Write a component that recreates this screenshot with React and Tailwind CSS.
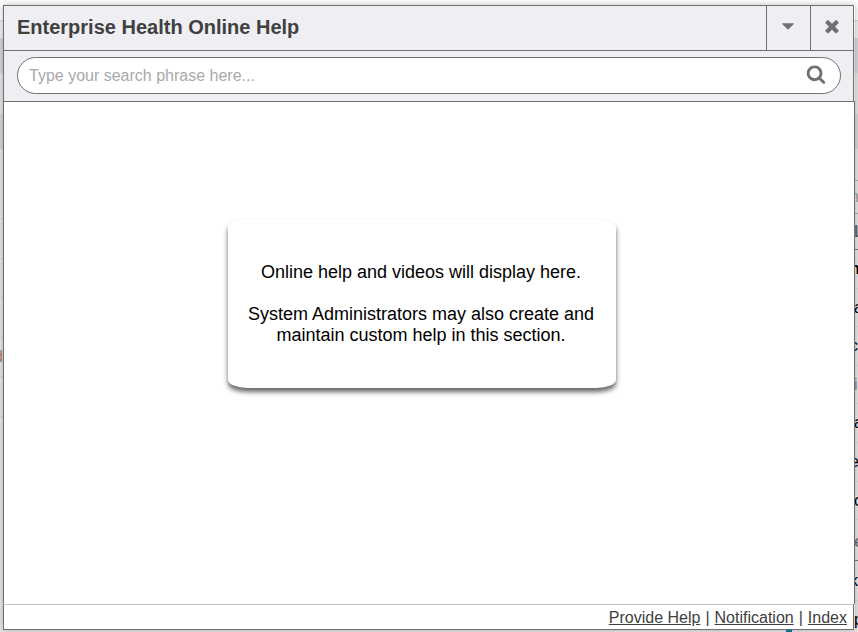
import React from "react";

const SearchIcon = () => (
  <svg viewBox="0 0 1792 1792" className="size-5" fill="currentColor" aria-hidden="true">
    <path d="M1216 832q0-185-131.5-316.5t-316.5-131.5-316.5 131.5-131.5 316.5 131.5 316.5 316.5 131.5 316.5-131.5 131.5-316.5zm512 832q0 52-38 90t-90 38q-54 0-90-38l-343-342q-179 124-399 124-143 0-273.5-55.5t-225-150-150-225-55.5-273.5 55.5-273.5 150-225 225-150 273.5-55.5 273.5 55.5 225 150 150 225 55.5 273.5q0 220-124 399l343 343q37 37 37 90z" />
  </svg>
);

const CloseIcon = () => (
  <svg viewBox="0 0 1792 1792" className="size-5" fill="currentColor" aria-hidden="true">
    <path d="M1490 1322q0 40-28 68l-136 136q-28 28-68 28t-68-28l-294-294-294 294q-28 28-68 28t-68-28l-136-136q-28-28-28-68t28-68l294-294-294-294q-28-28-28-68t28-68l136-136q28-28 68-28t68 28l294 294 294-294q28-28 68-28t68 28l136 136q28 28 28 68t-28 68l-294 294 294 294q28 28 28 68z" />
  </svg>
);

const CaretIcon = () => (
  <svg viewBox="0 0 1792 1792" className="size-5" fill="currentColor" aria-hidden="true">
    <path d="M1408 704q0 26-19 45l-448 448q-19 19-45 19t-45-19l-448-448q-19-19-19-45t19-45 45-19h896q26 0 45 19t19 45z" />
  </svg>
);

// Rows of the page under the help window
const leftRows = [
  { size: "h-[39px]" },
  { size: "h-[40px]" },
  { size: "h-[39px]" },
  { size: "h-[40px]" },
  { size: "h-[39px]", text: "d" },
  { size: "h-[40px]" },
];

const rightRows = [
  { size: "h-[33px] border-[#aaa]", text: "n", style: "text-[#999]" },
  { size: "h-[36px] border-[#777]", text: "L", style: "pl-1 font-bold text-[#666]" },
  { size: "h-[39px] border-[#d5d5d5]", text: "n", style: "font-bold text-black" },
  { size: "h-[38px] border-[#d5d5d5]", text: "a", style: "pl-1 text-black" },
  { size: "h-[39px] border-[#d5d5d5]", text: "c", style: "text-black" },
  { size: "h-[38px] border-[#d5d5d5]", text: "in", style: "pl-1 text-[#888]" },
  { size: "h-[39px] border-[#d5d5d5]", text: "a", style: "pl-1 text-black" },
  { size: "h-[39px] border-[#d5d5d5]", text: "e", style: "text-black" },
  { size: "h-[38px] border-[#d5d5d5]", text: "c", style: "pl-1 text-black" },
  { size: "h-[41px] border-[#777]", text: "e", style: "pt-1 pl-1 font-bold text-[#777]" },
  { size: "h-[40px] border-[#d5d5d5]", text: "k", style: "text-black" },
  { size: "h-[39px] border-[#d5d5d5]", text: "p", style: "pl-1 text-black" },
];

const PageBehind = () => (
  <div className="flex h-screen flex-col overflow-hidden bg-[#e5e5e5]" aria-hidden="true">
    <div className="h-5 shrink-0 bg-[#fdfdfd]" />
    <div className="h-[18px] shrink-0 border-t border-[#d5d5d5] bg-[#efefef]" />
    <div className="h-[35px] shrink-0 bg-[#d5d5d9]" />
    <div className="h-[41px] shrink-0" />
    <div className="h-[35px] shrink-0 bg-[#d5d5d9]" />
    <div className="flex min-h-0 flex-1">
      <div className="w-[3px] pt-[31px]">
        {leftRows.map((row, i) => (
          <div key={i} className={`flex items-center justify-end overflow-hidden border-b border-[#d5d5d5] text-[#b08060] ${row.size}`}>
            {row.text}
          </div>
        ))}
      </div>
      <div className="mr-[58px] ml-auto h-1 w-[6px] self-end bg-[#0a77a5]" />
      <div className="w-2">
        <div className="h-8 border-b border-[#aaa]" />
        {rightRows.map((row, i) => (
          <div key={i} className={`flex items-center overflow-hidden border-b ${row.size}`}>
            <span className={row.style}>{row.text}</span>
          </div>
        ))}
      </div>
    </div>
  </div>
);

const Header = () => (
  <header className="mr-px flex h-[46px] border border-[#707070] bg-[#efeef3]">
    <h1 className="flex-1 pt-[6px] pl-[13px] text-xl leading-[30px] font-bold text-[#404040]">
      Enterprise Health Online Help
    </h1>
    <button type="button" aria-label="More options" className="flex w-11 items-center justify-center border-l border-[#707070] pr-px pb-1">
      <CaretIcon />
    </button>
    <button type="button" aria-label="Close" className="flex w-[43px] items-center justify-center border-l border-[#707070] pb-1">
      <CloseIcon />
    </button>
  </header>
);

const SearchBar = () => (
  <form className="mr-px border-x border-[#707070] bg-[#efeef3] pt-[6px] pr-3 pb-[7px] pl-[13px]">
    <div className="flex h-[37px] items-center rounded-full border border-[#707070] bg-white pr-[14px] pl-[11px]">
      <input
        type="text"
        aria-label="Search help"
        placeholder="Type your search phrase here..."
        className="min-w-0 flex-1 text-base text-[#333] outline-none placeholder:text-[#a9a9a9]"
      />
      <button type="button" aria-label="Search" className="pb-1">
        <SearchIcon />
      </button>
    </div>
  </form>
);

const Footer = () => (
  <footer className="mr-px flex h-[26px] items-center justify-end gap-[5px] border border-t-[#c0c0c0] border-[#707070] bg-white pt-[2px] pr-[6px] text-base text-[#404040]">
    <a href="#provide" className="underline">Provide Help</a>
    <span>|</span>
    <a href="#notification" className="underline">Notification</a>
    <span>|</span>
    <a href="#index" className="underline">Index</a>
  </footer>
);

const App = () => {
  return (
    <div className="font-['Liberation_Sans',Arial,sans-serif]">
      <PageBehind />
      <section
        role="dialog"
        aria-label="Enterprise Health Online Help"
        className="fixed top-[5px] right-[3px] bottom-[2px] left-[3px] flex flex-col text-[#707070] shadow-[0_0_6px_rgba(0,0,0,0.25)]"
      >
        <Header />
        <SearchBar />
        <main className="flex flex-1 items-start justify-center border-x border-t border-[#707070] bg-white pt-[117px] pr-[14px]">
          <div className="w-[388px] rounded-[5%] bg-white pt-[43px] pr-[21px] pb-[42px] pl-[19px] text-center text-lg leading-[21px] text-black shadow-[0_4px_5px_rgba(0,0,0,0.6)]">
            <p>Online help and videos will display here.</p>
            <p className="mt-[21px]">
              System Administrators may also create and maintain custom help in this section.
            </p>
          </div>
        </main>
        <Footer />
      </section>
    </div>
  );
};

export default App;
